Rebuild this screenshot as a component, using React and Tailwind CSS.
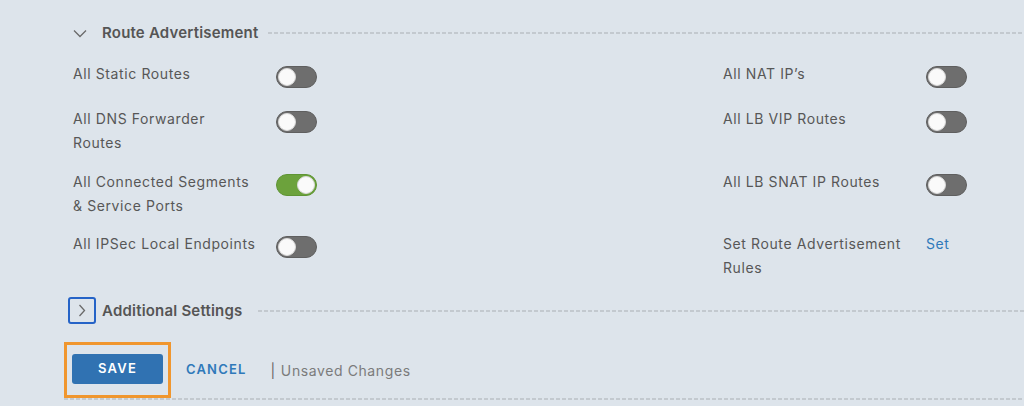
import React, { useState } from "react";

const dots =
  "bg-[linear-gradient(to_right,#c3c9cf_4px,transparent_4px)] bg-[length:6px_2px] bg-repeat-x";

// Small switch, same look as the Clarity toggles
const Toggle = ({ on, onChange }) => (
  <button
    type="button"
    onClick={onChange}
    className={`relative mt-[4px] h-[22px] w-[41px] shrink-0 rounded-full border ${
      on ? "border-[#5f9434] bg-[#6ca23c]" : "border-[#5f5f5f] bg-[#6e6e6e]"
    }`}
  >
    <span
      className={`absolute top-[1px] h-[18px] w-[18px] rounded-full bg-[#fafafa] border border-[#d8d8d8] ${
        on ? "left-[20px]" : "left-[1px]"
      }`}
    />
  </button>
);

const Field = ({ label, children }) => (
  <div className="flex items-start">
    <div className="w-[203px] shrink-0 whitespace-nowrap leading-[24px]">
      {label}
    </div>
    {children}
  </div>
);

const App = () => {
  const [toggles, setToggles] = useState({
    staticRoutes: false,
    dnsForwarder: false,
    connected: true,
    ipsec: false,
    nat: false,
    lbVip: false,
    lbSnat: false,
  });

  const flip = (key) => setToggles((t) => ({ ...t, [key]: !t[key] }));

  return (
    <div
      className="h-[406px] w-full overflow-hidden bg-[#dde4eb] text-[14px] tracking-[0.6px] text-[#575757]"
      style={{ fontFamily: "Inter, 'Liberation Sans', sans-serif" }}
    >
      {/* Route Advertisement header */}
      <div className="flex items-center pt-[21px] pl-[73px]">
        <svg width="14" height="9" viewBox="0 0 14 9" className="shrink-0">
          <path
            d="M1 1.5 L7 7.5 L13 1.5"
            fill="none"
            stroke="#6a6a6a"
            strokeWidth="1.3"
          />
        </svg>
        <span className="ml-[15px] text-[15px] font-semibold leading-[24px] tracking-[0.2px] text-[#555]">
          Route Advertisement
        </span>
        <div className={`ml-[10px] h-[2px] flex-1 ${dots}`} />
      </div>

      {/* Toggles, two columns per row */}
      <div className="flex flex-col pl-[73px] pt-[17px]">
        <div className="grid grid-cols-[650px_1fr]">
          <Field label="All Static Routes">
            <Toggle on={toggles.staticRoutes} onChange={() => flip("staticRoutes")} />
          </Field>
          <Field label="All NAT IP’s">
            <Toggle on={toggles.nat} onChange={() => flip("nat")} />
          </Field>
        </div>
        <div className="mt-[19px] grid grid-cols-[650px_1fr]">
          <Field label={<>All DNS Forwarder<br />Routes</>}>
            <Toggle on={toggles.dnsForwarder} onChange={() => flip("dnsForwarder")} />
          </Field>
          <Field label="All LB VIP Routes">
            <Toggle on={toggles.lbVip} onChange={() => flip("lbVip")} />
          </Field>
        </div>
        <div className="mt-[15px] grid grid-cols-[650px_1fr]">
          <Field label={<>All Connected Segments<br />&amp; Service Ports</>}>
            <Toggle on={toggles.connected} onChange={() => flip("connected")} />
          </Field>
          <Field label="All LB SNAT IP Routes">
            <Toggle on={toggles.lbSnat} onChange={() => flip("lbSnat")} />
          </Field>
        </div>
        <div className="mt-[14px] grid grid-cols-[650px_1fr]">
          <Field label="All IPSec Local Endpoints">
            <Toggle on={toggles.ipsec} onChange={() => flip("ipsec")} />
          </Field>
          <Field label={<>Set Route Advertisement<br />Rules</>}>
            <a href="#" className="leading-[24px] text-[#2f79ba]">
              Set
            </a>
          </Field>
        </div>
      </div>

      {/* Additional Settings */}
      <div className="mt-[17px] flex items-center pl-[68px]">
        <button
          type="button"
          className="flex h-[27px] w-[28px] shrink-0 items-center justify-center rounded-[3px] border-2 border-[#2563c7]"
        >
          <svg width="8" height="13" viewBox="0 0 8 13">
            <path
              d="M1.5 1 L6.5 6.5 L1.5 12"
              fill="none"
              stroke="#6a6a6a"
              strokeWidth="1.3"
            />
          </svg>
        </button>
        <span className="ml-[6px] text-[15px] font-semibold leading-[24px] tracking-[0.2px] text-[#555]">
          Additional Settings
        </span>
        <div className={`ml-[16px] h-[2px] flex-1 ${dots}`} />
      </div>

      {/* Actions */}
      <div className="mt-[30px] flex items-center pl-[72px]">
        <div className="relative">
          <span className="pointer-events-none absolute -left-[8px] -right-[8px] -top-[12px] -bottom-[14px] border-[3px] border-[#f0962e]" />
          <button
            type="button"
            className="h-[30px] w-[91px] rounded-[3px] bg-[#3072b2] text-[13px] font-semibold tracking-[1.2px] text-white"
          >
            SAVE
          </button>
        </div>
        <button
          type="button"
          className="ml-[23px] mt-[2px] text-[13px] font-semibold tracking-[1.2px] text-[#2f79ba]"
        >
          CANCEL
        </button>
        <span className="ml-[24px] mt-[2px] text-[#666]">|</span>
        <span className="ml-[5px] mt-[2px] text-[#7b7b7b]">Unsaved Changes</span>
      </div>
      <div className={`ml-[64px] mt-[14px] h-[2px] ${dots}`} />
    </div>
  );
};

export default App;
